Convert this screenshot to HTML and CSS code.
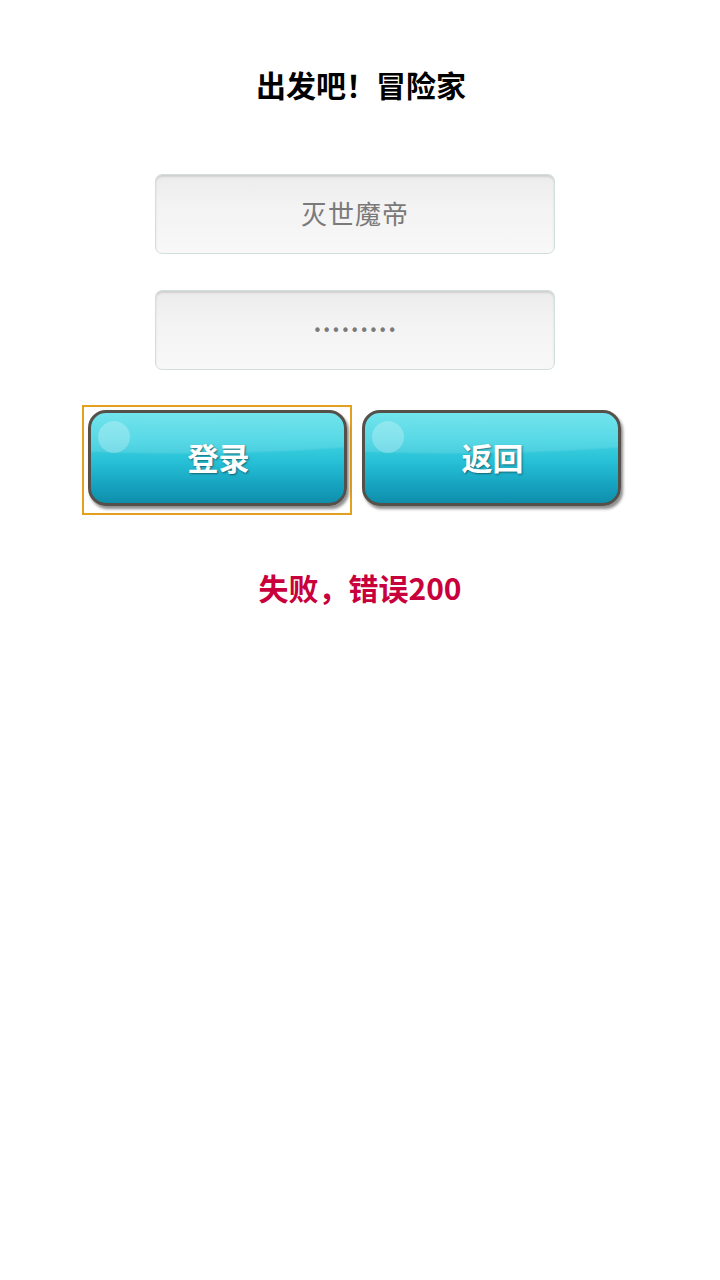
FILE: index.html
```html
<!DOCTYPE html>
<html lang="zh">
<head>
<meta charset="utf-8">
<title>出发吧！冒险家</title>
<link rel="stylesheet" href="styles.css">
</head>
<body>
<main class="page">
  <h1 class="title">出发吧！冒险家</h1>
  <div class="form">
    <div class="field"><span class="field-text">灭世魔帝</span></div>
    <div class="field"><span class="field-dots">•••••••••</span></div>
    <div class="actions">
      <div class="btn-cell focused">
        <button class="btn"><span class="dot"></span><span class="btn-label">登录</span></button>
      </div>
      <div class="btn-cell">
        <button class="btn"><span class="dot"></span><span class="btn-label">返回</span></button>
      </div>
    </div>
  </div>
  <p class="error">失败，错误200</p>
</main>
</body>
</html>
```

FILE: styles.css
```css
html, body {
  margin: 0;
  padding: 0;
  background: #ffffff;
}

body {
  width: 720px;
  height: 1280px;
  font-family: "Noto Sans CJK SC", "Noto Sans", sans-serif;
}

.page {
  display: flex;
  flex-direction: column;
  padding-top: 64px;
}

.title {
  margin: 0;
  padding-left: 2px;
  text-align: center;
  font-size: 30px;
  line-height: 40px;
  font-weight: 700;
  color: #000;
}

.form {
  display: flex;
  flex-direction: column;
  margin-top: 70px;
}

.field {
  box-sizing: border-box;
  width: 400px;
  height: 80px;
  margin-left: 155px;
  margin-bottom: 36px;
  border: 1px solid #d3dede;
  border-radius: 7px;
  background: linear-gradient(#ececec 0%, #f3f3f3 40%, #f8f8f8 100%);
  box-shadow: inset 0 2px 2px rgba(0, 0, 0, 0.12);
  display: flex;
  align-items: center;
  justify-content: center;
}

.field-text {
  font-size: 26px;
  color: #7a7a7a;
  line-height: 1;
  letter-spacing: 1px;
  margin-top: -2px;
}

.field-dots {
  font-family: "DejaVu Sans", sans-serif;
  font-size: 15px;
  letter-spacing: 0.5px;
  color: #7a7a7a;
  line-height: 1;
  margin-top: 2px;
}

.actions {
  display: flex;
  gap: 4px;
  margin-left: 82px;
  margin-top: -1px;
}

.btn-cell {
  box-sizing: border-box;
  width: 270px;
  height: 110px;
  padding: 4px 0 0 5px;
  border: 1px solid transparent;
}

.btn-cell.focused {
  border: 2px solid #e3a01e;
  padding: 3px 0 0 4px;
}

.btn {
  position: relative;
  box-sizing: border-box;
  width: 259px;
  height: 96px;
  padding: 0;
  border: 3px solid #55504a;
  border-radius: 18px;
  overflow: hidden;
  background:
    radial-gradient(ellipse 170% 75% at 35% -20%, rgba(255, 255, 255, 0.16) 0%, rgba(255, 255, 255, 0.12) 85%, rgba(255, 255, 255, 0) 88%),
    linear-gradient(#5adfe9 0%, #3fd3e2 30%, #26bfd5 55%, #16a3c0 80%, #0f8eab 100%);
  box-shadow: 2px 3px 3px rgba(0, 0, 0, 0.45);
  display: flex;
  align-items: center;
  justify-content: center;
  cursor: pointer;
}

.dot {
  position: absolute;
  left: 7px;
  top: 8px;
  width: 32px;
  height: 32px;
  border-radius: 50%;
  background: rgba(255, 255, 255, 0.25);
}

.btn-label {
  position: relative;
  font-family: "Noto Sans CJK SC", sans-serif;
  font-size: 31px;
  font-weight: 700;
  color: #ffffff;
  line-height: 1;
  text-shadow: 1px 1px 2px rgba(0, 0, 0, 0.45);
  margin-left: 2px;
  margin-top: -4px;
}

.error {
  margin: 52px 0 0 0;
  text-align: center;
  font-size: 30px;
  line-height: 40px;
  font-weight: 700;
  color: #c8003c;
}
```
